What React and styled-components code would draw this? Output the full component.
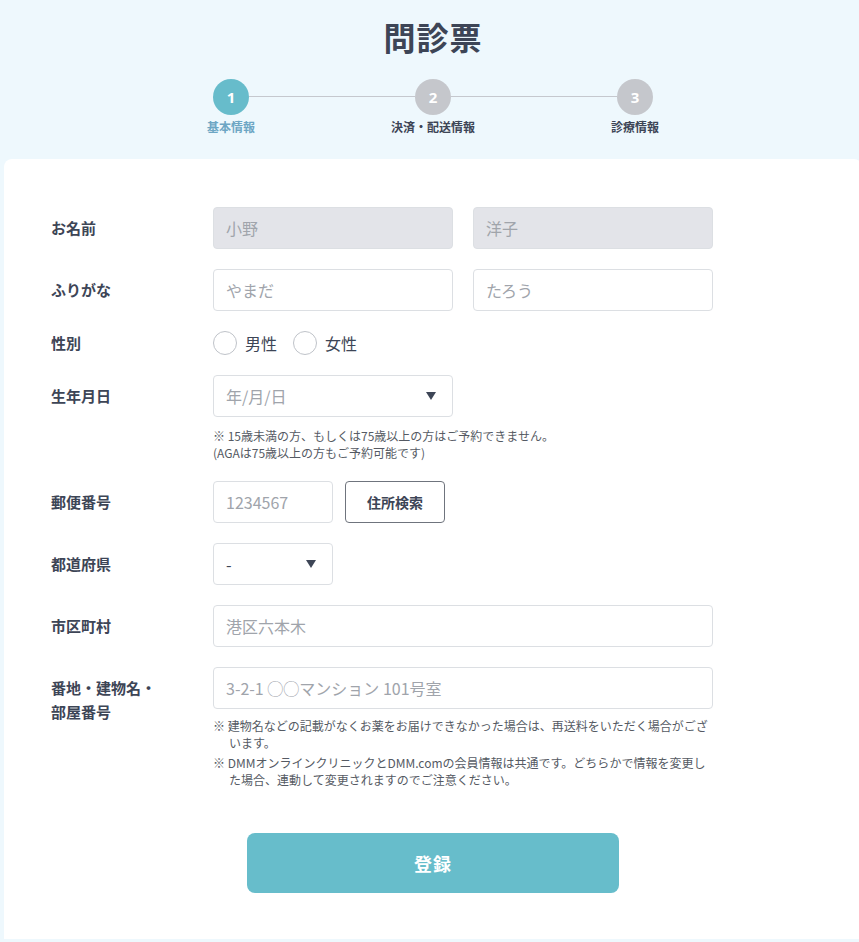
import React from 'react'
import styled, { createGlobalStyle } from 'styled-components'

const GlobalStyle = createGlobalStyle`
    html, body {
        margin: 0;
        padding: 0;
        background: #eef8fd;
        overflow-x: hidden;
    }

    body {
        font-family: 'Noto Sans CJK JP', 'Noto Sans', sans-serif;
        color: #3d4556;
    }

    * {
        box-sizing: border-box;
    }
`

const Page = styled.div`
    width: 866px;
    padding-bottom: 3px;
`

const Header = styled.header`
    display: flex;
    flex-direction: column;
    align-items: center;

    padding-top: 14px;
    padding-bottom: 24px;
`

const Title = styled.h1`
    margin: 0;

    font-size: 32px;
    font-weight: 700;
    line-height: 45px;
    letter-spacing: 1px;

    color: #3d4556;
`

const Stepper = styled.ol`
    display: flex;
    align-items: flex-start;

    margin: 20px 0 0;
    padding: 0;

    list-style: none;
`

const Step = styled.li`
    display: flex;
    flex-direction: column;
    align-items: center;

    width: 36px;
`

const StepCircle = styled.span`
    display: flex;
    justify-content: center;
    align-items: center;

    width: 36px;
    height: 36px;

    border-radius: 50%;

    background-color: ${props => props.active ? '#67bccb' : '#c5c7cc'};

    font-family: 'Noto Sans', sans-serif;
    font-size: 15px;
    font-weight: 700;

    color: #ffffff;
`

const StepLabel = styled.span`
    margin-top: 4px;

    white-space: nowrap;

    font-size: 12px;
    font-weight: 700;
    line-height: 16px;

    color: ${props => props.active ? '#6da6c4' : '#3d4556'};
`

const Connector = styled.li`
    flex: 0 0 166px;

    height: 1px;
    margin-top: 17px;

    background-color: #c5c8ce;
`

const Card = styled.main`
    width: 858px;
    margin-left: 4px;
    padding: 48px 0 46px 47px;

    border-radius: 8px 8px 0 0;

    background-color: #ffffff;
`

const Form = styled.form`
    display: flex;
    flex-direction: column;
    gap: 20px;
`

const Row = styled.div`
    display: flex;
    align-items: flex-start;
`

const Label = styled.div`
    flex: 0 0 162px;

    padding-top: ${props => props.compact ? '0' : '9px'};

    font-size: 15px;
    font-weight: 700;
    line-height: 24px;

    color: #3d4556;
`

const Field = styled.div`
    display: flex;
    flex-direction: column;

    width: 500px;
`

const Inline = styled.div`
    display: flex;
    align-items: center;
    gap: ${props => props.gap || 20}px;
`

const Input = styled.input`
    width: ${props => props.width || 240}px;
    height: 42px;
    padding: 0 12px;

    border: 1px solid #dcdfe3;
    border-radius: 4px;

    background-color: ${props => props.disabled ? '#e3e4e9' : '#ffffff'};

    font-family: inherit;
    font-size: 16px;

    color: #3d4556;

    &::placeholder {
        color: #a0a4ab;
    }

    &:disabled {
        color: #a0a4ab;
    }
`

const Select = styled.div`
    display: flex;
    justify-content: space-between;
    align-items: center;

    width: ${props => props.width}px;
    height: 42px;
    padding: 0 16px 0 12px;

    border: 1px solid #dcdfe3;
    border-radius: 4px;

    font-size: 16px;

    color: ${props => props.muted ? '#a0a4ab' : '#3d4556'};

    &::after {
        content: '';

        width: 0;
        height: 0;

        border-left: 5px solid transparent;
        border-right: 5px solid transparent;
        border-top: 8px solid #3d4556;
    }
`

const SearchButton = styled.button`
    width: 100px;
    height: 42px;

    border: 1px solid #6f747d;
    border-radius: 4px;

    background-color: #ffffff;

    font-family: inherit;
    font-size: 14px;
    font-weight: 700;

    color: #3d4556;
`

const RadioGroup = styled.div`
    display: flex;
    align-items: center;
    gap: 16px;

    height: 24px;
`

const Radio = styled.label`
    display: flex;
    align-items: center;
    gap: 8px;

    font-size: 16px;
    line-height: 24px;

    color: #3d4556;

    &::before {
        content: '';

        width: 24px;
        height: 24px;

        border: 1px solid #bfc3c9;
        border-radius: 50%;

        box-sizing: border-box;
    }
`

const Notes = styled.div`
    display: flex;
    flex-direction: column;
    gap: 3px;

    margin-top: ${props => props.spaced ? '10px' : '8px'};
`

const Note = styled.p`
    margin: 0;
    padding-left: ${props => props.hang ? '16px' : '0'};

    text-indent: ${props => props.hang ? '-16px' : '0'};

    font-size: 12px;
    line-height: 17px;

    color: #555a63;
`

const Submit = styled.button`
    display: block;

    width: 372px;
    height: 60px;
    margin: 45px 0 0 196px;

    border: none;
    border-radius: 8px;

    background-color: #67bdcb;

    font-family: inherit;
    font-size: 18px;
    font-weight: 700;
    letter-spacing: 1px;

    color: #ffffff;
`

const steps = ['基本情報', '決済・配送情報', '診療情報']

const App = () => {
    return (
        <Page>
            <GlobalStyle />
            <Header>
                <Title>問診票</Title>
                <Stepper>
                    {steps.map((label, i) => (
                        <React.Fragment key={label}>
                            {i > 0 && <Connector />}
                            <Step>
                                <StepCircle active={i === 0}>{i + 1}</StepCircle>
                                <StepLabel active={i === 0}>{label}</StepLabel>
                            </Step>
                        </React.Fragment>
                    ))}
                </Stepper>
            </Header>

            <Card>
                <Form onSubmit={e => e.preventDefault()}>
                    <Row>
                        <Label>お名前</Label>
                        <Inline>
                            <Input disabled defaultValue='小野' />
                            <Input disabled defaultValue='洋子' />
                        </Inline>
                    </Row>

                    <Row>
                        <Label>ふりがな</Label>
                        <Inline>
                            <Input placeholder='やまだ' />
                            <Input placeholder='たろう' />
                        </Inline>
                    </Row>

                    <Row>
                        <Label compact>性別</Label>
                        <RadioGroup>
                            <Radio>男性</Radio>
                            <Radio>女性</Radio>
                        </RadioGroup>
                    </Row>

                    <Row>
                        <Label>生年月日</Label>
                        <Field>
                            <Select width={240} muted>年/月/日</Select>
                            <Notes spaced>
                                <Note>※ 15歳未満の方、もしくは75歳以上の方はご予約できません。<br />(AGAは75歳以上の方もご予約可能です)</Note>
                            </Notes>
                        </Field>
                    </Row>

                    <Row>
                        <Label>郵便番号</Label>
                        <Inline gap={12}>
                            <Input width={120} placeholder='1234567' />
                            <SearchButton type='button'>住所検索</SearchButton>
                        </Inline>
                    </Row>

                    <Row>
                        <Label>都道府県</Label>
                        <Select width={120}>-</Select>
                    </Row>

                    <Row>
                        <Label>市区町村</Label>
                        <Input width={500} placeholder='港区六本木' />
                    </Row>

                    <Row>
                        <Label>番地・建物名・<br />部屋番号</Label>
                        <Field>
                            <Input width={500} placeholder='3-2-1 ◯◯マンション 101号室' />
                            <Notes>
                                <Note hang>※ 建物名などの記載がなくお薬をお届けできなかった場合は、再送料をいただく場合がございます。</Note>
                                <Note hang>※ DMMオンラインクリニックとDMM.comの会員情報は共通です。どちらかで情報を変更した場合、連動して変更されますのでご注意ください。</Note>
                            </Notes>
                        </Field>
                    </Row>
                </Form>

                <Submit type='button'>登録</Submit>
            </Card>
        </Page>
    )
}

export default App
